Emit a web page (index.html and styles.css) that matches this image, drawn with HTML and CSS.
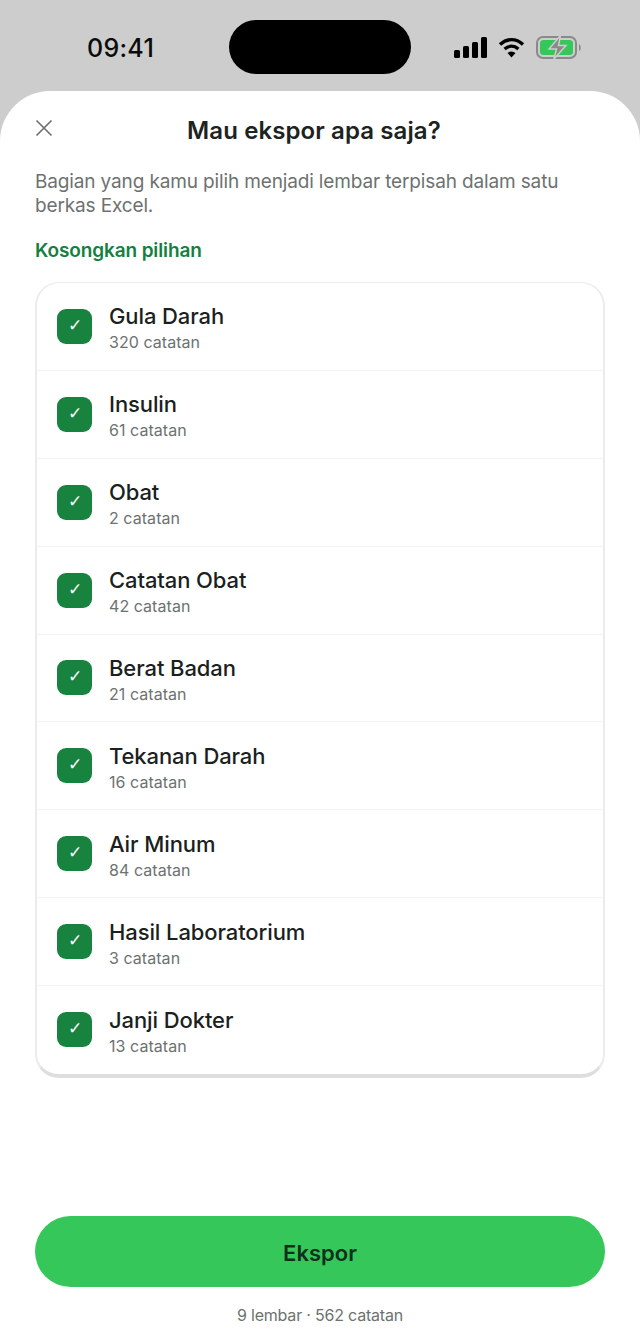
FILE: index.html
```html
<!DOCTYPE html>
<html lang="id">
<head>
<meta charset="utf-8">
<title>Mau ekspor apa saja?</title>
<link rel="stylesheet" href="styles.css">
</head>
<body>
<div class="statusbar">
  <span class="time">09:41</span>
  <div class="island"></div>
  <div class="status-icons">
    <svg class="ic-signal" width="33" height="21" viewBox="0 0 33 21"><rect x="0" y="13" width="6" height="8" rx="1.5"/><rect x="9" y="9" width="6" height="12" rx="1.5"/><rect x="18" y="5" width="6" height="16" rx="1.5"/><rect x="27" y="0" width="6" height="21" rx="1.5"/></svg>
    <svg class="ic-wifi" width="27" height="21" viewBox="0 0 27 21"><path d="M2 7.5C9 1 18 1 25 7.5" class="wf"/><path d="M6.6 12C10.8 8.4 16.2 8.4 20.400 12" class="wf"/><path d="M13.500 20.500L9.500 16C12 14 15 14 17.500 16Z"/></svg>
    <svg class="ic-batt" width="46" height="23" viewBox="0 0 46 23"><rect x="1" y="1" width="39" height="21" rx="6" fill="none" stroke="#8a8a8a" stroke-width="2"/><rect x="4" y="4" width="33" height="15" rx="3.500" fill="#34c759"/><path d="M43 8c2 .5 2.500 6.500 0 7z" fill="#8a8a8a"/><path d="M24.500 -0.500L13 13h7.500l-2.500 10L30 9.500h-7.500z" fill="#8a8a8a" stroke="#cdcdcd" stroke-width="1.500"/></svg>
  </div>
</div>
<main class="sheet">
  <header class="head">
    <button class="close" aria-label="Tutup"><svg width="20" height="20" viewBox="0 0 20 20"><path d="M2.500 2.500L17.500 17.500M17.500 2.500L2.500 17.500" fill="none" stroke="#6b6f6d" stroke-width="1.600"/></svg></button>
    <h1 class="title">Mau ekspor apa saja?</h1>
  </header>
  <p class="desc">Bagian yang kamu pilih menjadi lembar terpisah dalam satu berkas Excel.</p>
  <a class="clear">Kosongkan pilihan</a>
  <ul class="card">
    <li class="row"><span class="check">✓</span><div class="txt"><span class="name">Gula Darah</span><span class="count">320 catatan</span></div></li>
    <li class="row"><span class="check">✓</span><div class="txt"><span class="name">Insulin</span><span class="count">61 catatan</span></div></li>
    <li class="row"><span class="check">✓</span><div class="txt"><span class="name">Obat</span><span class="count">2 catatan</span></div></li>
    <li class="row"><span class="check">✓</span><div class="txt"><span class="name">Catatan Obat</span><span class="count">42 catatan</span></div></li>
    <li class="row"><span class="check">✓</span><div class="txt"><span class="name">Berat Badan</span><span class="count">21 catatan</span></div></li>
    <li class="row"><span class="check">✓</span><div class="txt"><span class="name">Tekanan Darah</span><span class="count">16 catatan</span></div></li>
    <li class="row"><span class="check">✓</span><div class="txt"><span class="name">Air Minum</span><span class="count">84 catatan</span></div></li>
    <li class="row"><span class="check">✓</span><div class="txt"><span class="name">Hasil Laboratorium</span><span class="count">3 catatan</span></div></li>
    <li class="row"><span class="check">✓</span><div class="txt"><span class="name">Janji Dokter</span><span class="count">13 catatan</span></div></li>
  </ul>
  <div class="footer">
    <button class="cta">Ekspor</button>
    <p class="summary">9 lembar · 562 catatan</p>
  </div>
</main>
</body>
</html>
```
FILE: styles.css
```css
* { box-sizing: border-box; }
html, body { margin: 0; padding: 0; }
body {
  width: 640px;
  height: 1343px;
  overflow: hidden;
  background: #cdcdcd;
  font-family: Inter, "Liberation Sans", sans-serif;
  display: flex;
  flex-direction: column;
}
.statusbar {
  height: 91px;
  flex: none;
  display: flex;
  align-items: flex-start;
  position: relative;
}
.time {
  margin: 33px 0 0 87px;
  font-size: 25px;
  line-height: 30px;
  font-weight: 500;
  color: #0b0b0b;
  letter-spacing: 0.3px;
}
.island {
  position: absolute;
  left: 229px;
  top: 20px;
  width: 182px;
  height: 54px;
  border-radius: 27px;
  background: #000;
}
.status-icons {
  position: absolute;
  left: 454px;
  top: 36px;
  display: flex;
  align-items: center;
}
.ic-signal { margin-right: 11px; }
.ic-wifi { margin-right: 11px; }
.ic-wifi path { fill: #000; }
.ic-wifi .wf { fill: none; stroke: #000; stroke-width: 3.400; }
.sheet {
  flex: 1;
  background: #fff;
  border-radius: 50px 50px 0 0;
  padding: 0 35px;
  display: flex;
  flex-direction: column;
  min-height: 0;
}
.head {
  height: 79px;
  flex: none;
  padding-right: 12px;
  position: relative;
  display: flex;
  align-items: center;
  justify-content: center;
}
.close {
  position: absolute;
  left: -1px;
  top: 27px;
  width: 20px;
  height: 20px;
  padding: 0;
  border: 0;
  background: none;
  display: block;
}
.close svg { display: block; }
.title {
  margin: 0;
  font-size: 24px;
  line-height: 30px;
  font-weight: 600;
  color: #1c2321;
  letter-spacing: 0.1px;
}
.desc {
  margin: 0;
  font-size: 19px;
  line-height: 24px;
  color: #6d7270;
  letter-spacing: -0.14px;
}
.clear {
  display: block;
  margin-top: 21px;
  font-size: 19px;
  line-height: 24px;
  font-weight: 600;
  color: #14803f;
  letter-spacing: -0.12px;
}
.card {
  list-style: none;
  margin: 19px 0 0;
  padding: 0;
  height: 796px;
  flex: none;
  border: 2px solid #ececec;
  border-top-width: 1px;
  border-bottom: 4px solid #dedede;
  border-radius: 24px;
  overflow: hidden;
  background: #fff;
}
.row {
  height: 87.875px;
  padding-left: 20px;
  display: flex;
  align-items: center;
  gap: 17px;
  border-bottom: 1px solid #f3f3f3;
}
.row:last-child { border-bottom: 0; }
.check {
  width: 35px;
  height: 35px;
  flex: none;
  border-radius: 9px;
  background: #18823f;
  color: #fff;
  font-family: "DejaVu Sans", sans-serif;
  font-size: 17px;
  font-weight: 300;
  line-height: 33px;
  text-align: center;
}
.txt {
  padding-top: 2px;
  display: flex;
  flex-direction: column;
}
.name {
  font-size: 22px;
  line-height: 28px;
  font-weight: 500;
  color: #1b1f1e;
  letter-spacing: -0.1px;
}
.count {
  margin-top: 2px;
  font-size: 16px;
  line-height: 20px;
  color: #6d7270;
  letter-spacing: 0.05px;
}
.footer {
  margin-top: auto;
  padding-bottom: 18px;
  display: flex;
  flex-direction: column;
  align-items: center;
}
.cta {
  width: 100%;
  height: 71px;
  padding: 2px 0 0;
  border: 0;
  border-radius: 36px;
  background: #35c75a;
  color: #10301c;
  font-family: inherit;
  font-size: 22px;
  font-weight: 600;
}
.summary {
  margin: 18px 0 0;
  font-size: 16px;
  line-height: 20px;
  color: #6d7270;
  letter-spacing: -0.2px;
}
```
